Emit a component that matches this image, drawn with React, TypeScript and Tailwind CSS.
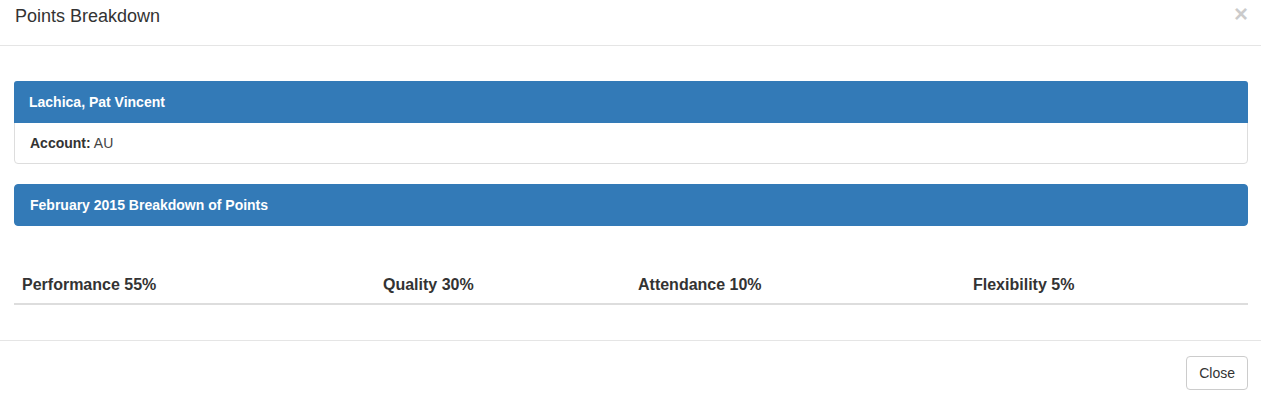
import React from "react";

export default function App() {
  const font = { fontFamily: '"Liberation Sans", Arial, Helvetica, sans-serif' };
  return (
    <div className="w-[1261px] h-[403px] bg-white text-[#333] text-[14px] leading-[20px]" style={font}>
      <div className="flex items-start justify-between pl-[15px] pr-[13px] pt-[4px] pb-[15px] border-b border-[#e5e5e5]">
        <h4 className="text-[18px] leading-[25.7px] font-normal m-0">Points Breakdown</h4>
        <button className="text-[24px] font-bold leading-[24px] text-black opacity-20 -mt-[2px]">×</button>
      </div>
      <div className="pl-[14px] pr-[13px] pt-[35px] pb-[35px]">
        <div className="border border-[#ddd] rounded-[4px] mb-[20px]">
          <div className="bg-[#337ab7] text-white font-bold px-[15px] py-[10px] rounded-t-[3px] border-b border-[#337ab7] -mx-px -mt-px pt-[11px]">
            Lachica, Pat Vincent
          </div>
          <div className="px-[15px] py-[10px]">
            <span className="font-bold">Account:</span> <span className="text-[#444]">AU</span>
          </div>
        </div>
        <div className="bg-[#337ab7] border border-[#337ab7] rounded-[4px] text-white font-bold px-[15px] py-[10px]">
          February 2015 Breakdown of Points
        </div>
        <table className="w-full mt-[41px] border-collapse">
          <thead>
            <tr className="text-[16px] font-bold text-left">
              <th className="w-[361px] p-[8px] border-b-2 border-[#ddd] text-left">Performance 55%</th>
              <th className="w-[255px] p-[8px] border-b-2 border-[#ddd] text-left">Quality 30%</th>
              <th className="w-[335px] p-[8px] border-b-2 border-[#ddd] text-left">Attendance 10%</th>
              <th className="p-[8px] border-b-2 border-[#ddd] text-left">Flexibility 5%</th>
            </tr>
          </thead>
        </table>
      </div>
      <div className="border-t border-[#e5e5e5] p-[15px] pr-[13px] flex justify-end">
        <button className="border border-[#ccc] rounded-[4px] bg-white px-[12px] py-[6px] text-[14px] leading-[20px] text-[#333]">
          Close
        </button>
      </div>
    </div>
  );
}
